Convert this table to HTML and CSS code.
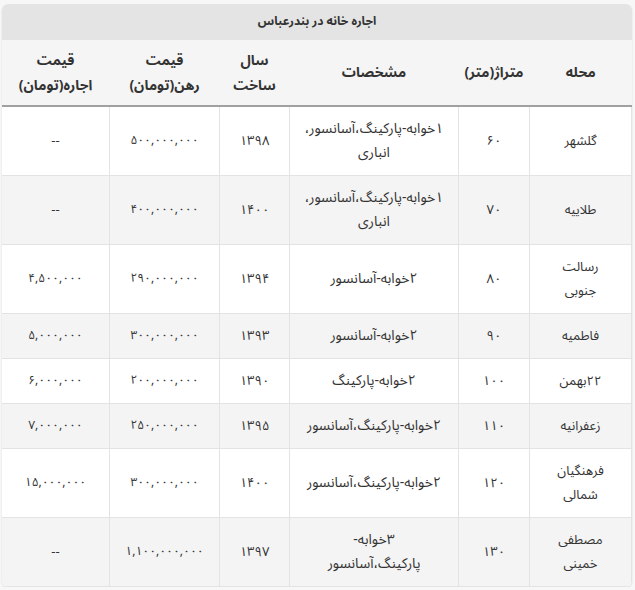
FILE: index.html
```html
<!DOCTYPE html>
<html lang="fa" dir="rtl">
<head>
<meta charset="utf-8">
<link rel="stylesheet" href="styles.css">
</head>
<body>
<div class="wrap">
  <div class="title">اجاره خانه در بندرعباس</div>
  <table class="grid">
    <colgroup>
      <col class="c-area"><col class="c-size"><col class="c-spec"><col class="c-year"><col class="c-mort"><col class="c-rent">
    </colgroup>
    <thead>
      <tr><th>محله</th><th>متراژ(متر)</th><th>مشخصات</th><th>سال<br>ساخت</th><th>قیمت<br>رهن(تومان)</th><th>قیمت<br>اجاره(تومان)</th></tr>
    </thead>
    <tbody>
      <tr class="tall"><td>گلشهر</td><td>۶۰</td><td class="spec">۱خوابه-پارکینگ،آسانسور، انباری</td><td>۱۳۹۸</td><td class="num">۵۰۰,۰۰۰,۰۰۰</td><td>--</td></tr>
      <tr class="tall"><td>طلاییه</td><td>۷۰</td><td class="spec">۱خوابه-پارکینگ،آسانسور، انباری</td><td>۱۴۰۰</td><td class="num">۴۰۰,۰۰۰,۰۰۰</td><td>--</td></tr>
      <tr><td>رسالت<br>جنوبی</td><td>۸۰</td><td class="spec">۲خوابه-آسانسور</td><td>۱۳۹۴</td><td class="num">۲۹۰,۰۰۰,۰۰۰</td><td class="num">۴,۵۰۰,۰۰۰</td></tr>
      <tr><td>فاطمیه</td><td>۹۰</td><td class="spec">۲خوابه-آسانسور</td><td>۱۳۹۳</td><td class="num">۳۰۰,۰۰۰,۰۰۰</td><td class="num">۵,۰۰۰,۰۰۰</td></tr>
      <tr><td>۲۲بهمن</td><td>۱۰۰</td><td class="spec">۲خوابه-پارکینگ</td><td>۱۳۹۰</td><td class="num">۲۰۰,۰۰۰,۰۰۰</td><td class="num">۶,۰۰۰,۰۰۰</td></tr>
      <tr><td>زعفرانیه</td><td>۱۱۰</td><td class="spec">۲خوابه-پارکینگ،آسانسور</td><td>۱۳۹۵</td><td class="num">۲۵۰,۰۰۰,۰۰۰</td><td class="num">۷,۰۰۰,۰۰۰</td></tr>
      <tr><td>فرهنگیان<br>شمالی</td><td>۱۲۰</td><td class="spec">۲خوابه-پارکینگ،آسانسور</td><td>۱۴۰۰</td><td class="num">۳۰۰,۰۰۰,۰۰۰</td><td class="num">۱۵,۰۰۰,۰۰۰</td></tr>
      <tr><td>مصطفی<br>خمینی</td><td>۱۳۰</td><td class="spec">۳خوابه-<br>پارکینگ،آسانسور</td><td>۱۳۹۷</td><td class="num">۱,۱۰۰,۰۰۰,۰۰۰</td><td>--</td></tr>
    </tbody>
  </table>
</div>
</body>
</html>
```
FILE: styles.css
```css
html, body {
  margin: 0;
  padding: 0;
  background: #f7f7f7;
}
body {
  padding: 4px 3px 0 2px;
  font-family: "Noto Sans Arabic", "DejaVu Sans", "Noto Sans", sans-serif;
  color: #333;
}
.wrap {
  width: 630px;
  background: #fff;
  border-radius: 6px;
  overflow: hidden;
  box-shadow: 0 1px 2px rgba(0,0,0,0.12);
}
.title {
  height: 36px;
  line-height: 36px;
  background: #e4e4e4;
  text-align: center;
  font-size: 12px;
  font-weight: bold;
  color: #333;
}
.grid {
  width: 630px;
  table-layout: fixed;
  border-collapse: collapse;
  font-size: 13px;
}
.c-area { width: 102px; }
.c-size { width: 71px; }
.c-spec { width: 169px; }
.c-year { width: 70px; }
.c-mort { width: 110px; }
.c-rent { width: 108px; }
.grid th {
  background: #f5f5f5;
  font-weight: bold;
  font-size: 14px;
  line-height: 25px;
  height: 65px;
  padding: 0 4px;
  border-bottom: 2px solid #a0a0a0;
  border-left: 1px solid #f5f5f5;
  text-align: center;
}
.grid td {
  text-align: center;
  line-height: 24px;
  padding: 10px 8px;
  border: 1px solid #e3e3e3;
  height: 24px;
}
.grid tbody tr:nth-child(even) td {
  background: #f4f4f4;
}
.grid tr.tall td {
  height: 48px;
}
.grid td.spec {
  font-size: 14px;
}
.grid td.num {
  font-size: 12px;
  letter-spacing: 0.3px;
}
```
